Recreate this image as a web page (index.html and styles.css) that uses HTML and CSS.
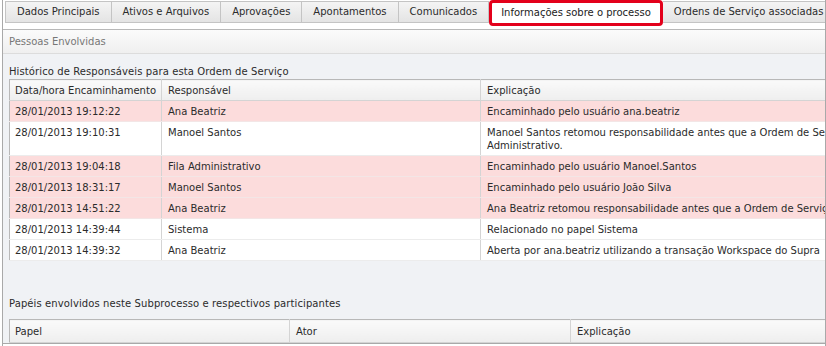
FILE: index.html
```html
<!DOCTYPE html>
<html lang="pt-BR">
<head>
    <meta charset="utf-8">
    <title>Informações sobre o processo</title>
    <link rel="stylesheet" href="styles.css">
</head>
<body>
    <div class="janela">
        <nav class="abas">
            <span class="aba">Dados Principais</span>
            <span class="aba">Ativos e Arquivos</span>
            <span class="aba">Aprovações</span>
            <span class="aba">Apontamentos</span>
            <span class="aba">Comunicados</span>
            <span class="aba ativa">Informações sobre o processo</span>
            <span class="aba">Ordens de Serviço associadas</span>
        </nav>

        <section class="painel">
            <div class="painel-titulo">Pessoas Envolvidas</div>

            <p class="legenda">Histórico de Responsáveis para esta Ordem de Serviço</p>
            <table class="grade historico">
                <thead>
                    <tr>
                        <th class="c-data">Data/hora Encaminhamento</th>
                        <th class="c-resp">Responsável</th>
                        <th>Explicação</th>
                    </tr>
                </thead>
                <tbody>
                    <tr class="destaque">
                        <td>28/01/2013 19:12:22</td>
                        <td>Ana Beatriz</td>
                        <td>Encaminhado pelo usuário ana.beatriz</td>
                    </tr>
                    <tr>
                        <td>28/01/2013 19:10:31</td>
                        <td>Manoel Santos</td>
                        <td>Manoel Santos retomou responsabilidade antes que a Ordem de Serviço fosse encaminhada<br>Administrativo.</td>
                    </tr>
                    <tr class="destaque">
                        <td>28/01/2013 19:04:18</td>
                        <td>Fila Administrativo</td>
                        <td>Encaminhado pelo usuário Manoel.Santos</td>
                    </tr>
                    <tr class="destaque">
                        <td>28/01/2013 18:31:17</td>
                        <td>Manoel Santos</td>
                        <td>Encaminhado pelo usuário João Silva</td>
                    </tr>
                    <tr class="destaque">
                        <td>28/01/2013 14:51:22</td>
                        <td>Ana Beatriz</td>
                        <td>Ana Beatriz retomou responsabilidade antes que a Ordem de Serviço fosse encaminhada</td>
                    </tr>
                    <tr>
                        <td>28/01/2013 14:39:44</td>
                        <td>Sistema</td>
                        <td>Relacionado no papel Sistema</td>
                    </tr>
                    <tr>
                        <td>28/01/2013 14:39:32</td>
                        <td>Ana Beatriz</td>
                        <td>Aberta por ana.beatriz utilizando a transação Workspace do Supra</td>
                    </tr>
                </tbody>
            </table>

            <p class="legenda legenda-papeis">Papéis envolvidos neste Subprocesso e respectivos participantes</p>
            <table class="grade papeis">
                <thead>
                    <tr>
                        <th class="c-papel">Papel</th>
                        <th class="c-ator">Ator</th>
                        <th>Explicação</th>
                    </tr>
                </thead>
                <tbody>
                    <tr class="vazia">
                        <td></td>
                        <td></td>
                        <td></td>
                    </tr>
                </tbody>
            </table>
        </section>
    </div>
</body>
</html>
```

FILE: styles.css
```css
body {
    margin: 0;
    background-color: white;
    font-family: "DejaVu Sans", Verdana, sans-serif;
    font-size: 10px;
    color: #2b2b2b;
}

.janela {
    width: 822px;
    height: 346px;
    margin-left: 2px;
    border-left: 1px solid #a9a9a9;
    border-right: 1px solid #a9a9a9;
    overflow: hidden;
}

/* abas */
.abas {
    display: flex;
    align-items: flex-start;
    height: 29px;
    padding-left: 2px;
    border-bottom: 1px solid #b8b8b8;
}

.aba {
    flex: none;
    margin-top: 1px;
    height: 20px;
    line-height: 20px;
    padding: 0 11px;
    border: 1px solid #c4c4c4;
    border-left: none;
    background: linear-gradient(#f4f4f4, #e4e4e4);
    white-space: nowrap;
}

.aba:first-child {
    border-left: 1px solid #c4c4c4;
}

.aba.ativa {
    margin-top: 0;
    height: 20px;
    padding: 0 9px;
    border: 3px solid #e3001b;
    border-radius: 4px;
    background: white;
    color: #222;
}

/* painel */
.painel {
    height: 313px;
    background-color: #f0f2f5;
    border-bottom: 1px solid #a9a9a9;
    overflow: hidden;
}

.painel-titulo {
    height: 23px;
    line-height: 23px;
    padding-left: 6px;
    color: #777;
    background: linear-gradient(#fbfbfb, #efefef);
    border-bottom: 1px solid #dcdcdc;
}

.legenda {
    margin: 0;
    padding: 11px 0 0 6px;
    height: 13px;
    line-height: 13px;
    letter-spacing: 0.1px;
}

.legenda-papeis {
    padding-top: 36px;
}

.grade {
    table-layout: fixed;
    width: 1000px;
    margin: 1px 0 0 6px;
    border-collapse: collapse;
    background-color: white;
    border: 1px solid #b8b8b8;
    border-right: none;
}

.grade th {
    height: 13px;
    padding: 4px 6px 3px;
    text-align: left;
    font-weight: normal;
    line-height: 13px;
    white-space: nowrap;
    background: linear-gradient(#fafafa, #eeeeee);
    border-bottom: 1px solid #d4d4d4;
    border-left: 1px solid #d4d4d4;
}

.grade td {
    padding: 4px 6px 3px;
    line-height: 13px;
    vertical-align: top;
    border-bottom: 1px solid #ececec;
    border-left: 1px solid #d4d4d4;
    white-space: nowrap;
}

.grade th:first-child,
.grade td:first-child {
    border-left: none;
    padding-left: 5px;
}

.grade .destaque td {
    background-color: #fcdcdc;
    border-bottom-color: #f3e6e6;
}

.papeis {
    margin-top: 9px;
}

.papeis th {
    padding: 5px 6px 4px;
}

.c-data {
    width: 140px;
}

.c-resp {
    width: 306px;
}

.c-papel {
    width: 268px;
}

.c-ator {
    width: 268px;
}
```
